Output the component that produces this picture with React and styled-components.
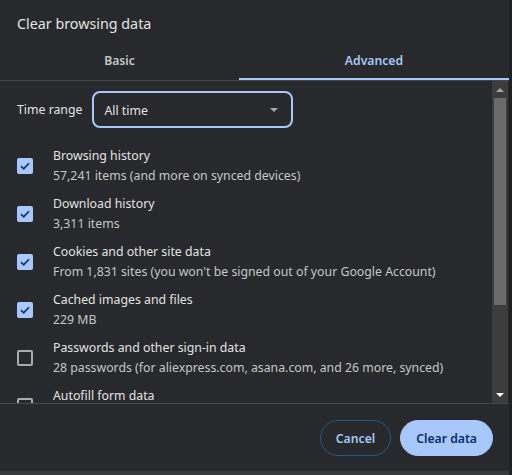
import React from "react";
import styled, { createGlobalStyle } from "styled-components";

const GlobalStyle = createGlobalStyle`
  html, body {
    margin: 0;
    padding: 0;
    background: #1f2023;
  }
  body {
    font-family: "Noto Sans", "Liberation Sans", sans-serif;
  }
`;

const StDialog = styled.div`
  width: 509px;
  height: 471px;
  background: #28292c;
  border-bottom: 4px solid #38393c;
  display: flex;
  flex-direction: column;
  color: #e3e3e3;
  overflow: hidden;
`;

const StTitle = styled.div`
  font-size: 14.3px;
  padding: 14px 17px 0;
  height: 28px;
  line-height: 20px;
`;

const StTabs = styled.div`
  display: grid;
  grid-template-columns: 239px 1fr;
  border-bottom: 1px solid #46474a;
`;

const StTab = styled.div`
  height: 38px;
  display: flex;
  align-items: center;
  justify-content: center;
  font-size: 12.2px;
  font-weight: 600;
  color: ${(p) => (p.$active ? "#a8c7fa" : "#c4c7c5")};
  box-sizing: border-box;
  border-bottom: 2px solid ${(p) => (p.$active ? "#a8c7fa" : "transparent")};
`;

const StBody = styled.div`
  height: 322px;
  display: flex;
  border-bottom: 1px solid #46474a;
`;

const StList = styled.div`
  flex: 1;
  overflow: hidden;
  padding: 10px 0 0 17px;
`;

const StRangeRow = styled.div`
  display: flex;
  align-items: center;
  gap: 10px;
  margin-bottom: 14px;
`;

const StLabel = styled.span`
  font-size: 12.3px;
  color: #e3e3e3;
`;

const StSelect = styled.div`
  width: 201px;
  height: 37px;
  box-sizing: border-box;
  border: 2px solid #a8c7fa;
  border-radius: 8px;
  display: flex;
  align-items: center;
  justify-content: space-between;
  padding: 1px 12px 0 10px;
  font-size: 12.3px;
  color: #e3e3e3;
`;

const StCaret = styled.span`
  width: 0;
  height: 0;
  border-left: 4px solid transparent;
  border-right: 4px solid transparent;
  border-top: 4px solid #a8aaad;
  margin-right: 1px;
`;

const StItem = styled.div`
  height: 48px;
  display: flex;
  align-items: center;
  gap: 20px;
`;

const StBox = styled.div`
  width: 16px;
  height: 16px;
  box-sizing: border-box;
  border-radius: 2px;
  display: flex;
  align-items: center;
  justify-content: center;
  flex-shrink: 0;
  background: ${(p) => (p.$checked ? "#a8c7fa" : "transparent")};
  border: ${(p) => (p.$checked ? "none" : "2px solid #a8aaad")};
`;

const StText = styled.div`
  display: flex;
  flex-direction: column;
`;

const StItemTitle = styled.div`
  font-size: 12.3px;
  line-height: 20px;
  color: #e3e3e3;
  white-space: nowrap;
`;

const StItemSub = styled.div`
  font-size: 12.3px;
  line-height: 20px;
  color: #c4c7c5;
  white-space: nowrap;
`;

const StScrollbar = styled.div`
  width: 16px;
  margin-right: 1px;
  background: #3c3c3d;
  display: flex;
  flex-direction: column;
  align-items: center;
`;

const StArrow = styled.div`
  height: 17px;
  display: flex;
  align-items: center;
  justify-content: center;
  &::after {
    content: "";
    border-left: 4px solid transparent;
    border-right: 4px solid transparent;
    ${(p) =>
      p.$down
        ? "border-top: 4px solid #ffffff;"
        : "border-bottom: 4px solid #a3a3a3;"}
  }
`;

const StThumb = styled.div`
  width: 12px;
  height: 207px;
  background: #6b6b6b;
`;

const StTrack = styled.div`
  flex: 1;
`;

const StFooter = styled.div`
  flex: 1;
  display: flex;
  justify-content: flex-end;
  align-items: center;
  gap: 9px;
  padding: 1px 16px 0;
`;

const StButton = styled.button`
  height: 36px;
  border-radius: 18px;
  font-family: inherit;
  font-size: 12.2px;
  font-weight: 600;
  padding: 0 15px;
  cursor: pointer;
  border: 1px solid ${(p) => (p.$primary ? "#a8c7fa" : "#1f5a8c")};
  background: ${(p) => (p.$primary ? "#a8c7fa" : "transparent")};
  color: ${(p) => (p.$primary ? "#062e6f" : "#a8c7fa")};
`;

const items = [
  { title: "Browsing history", sub: "57,241 items (and more on synced devices)", checked: true },
  { title: "Download history", sub: "3,311 items", checked: true },
  {
    title: "Cookies and other site data",
    sub: "From 1,831 sites (you won't be signed out of your Google Account)",
    checked: true,
  },
  { title: "Cached images and files", sub: "229 MB", checked: true },
  {
    title: "Passwords and other sign-in data",
    sub: "28 passwords (for aliexpress.com, asana.com, and 26 more, synced)",
    checked: false,
  },
  { title: "Autofill form data", sub: "5 addresses, 212 other suggestions (synced)", checked: false },
];

const Check = () => (
  <svg width="10" height="8" viewBox="0 0 10 8">
    <path d="M1 4.2 L3.7 6.8 L9 1.2" fill="none" stroke="#062e6f" strokeWidth="1.6" />
  </svg>
);

const App = () => {
  return (
    <>
      <GlobalStyle />
      <StDialog>
        <StTitle>Clear browsing data</StTitle>
        <StTabs>
          <StTab>Basic</StTab>
          <StTab $active>Advanced</StTab>
        </StTabs>
        <StBody>
          <StList>
            <StRangeRow>
              <StLabel>Time range</StLabel>
              <StSelect>
                All time
                <StCaret />
              </StSelect>
            </StRangeRow>
            {items.map((it) => (
              <StItem key={it.title}>
                <StBox $checked={it.checked}>{it.checked && <Check />}</StBox>
                <StText>
                  <StItemTitle>{it.title}</StItemTitle>
                  <StItemSub>{it.sub}</StItemSub>
                </StText>
              </StItem>
            ))}
          </StList>
          <StScrollbar>
            <StArrow />
            <StThumb />
            <StTrack />
            <StArrow $down />
          </StScrollbar>
        </StBody>
        <StFooter>
          <StButton>Cancel</StButton>
          <StButton $primary>Clear data</StButton>
        </StFooter>
      </StDialog>
    </>
  );
};

export default App;
